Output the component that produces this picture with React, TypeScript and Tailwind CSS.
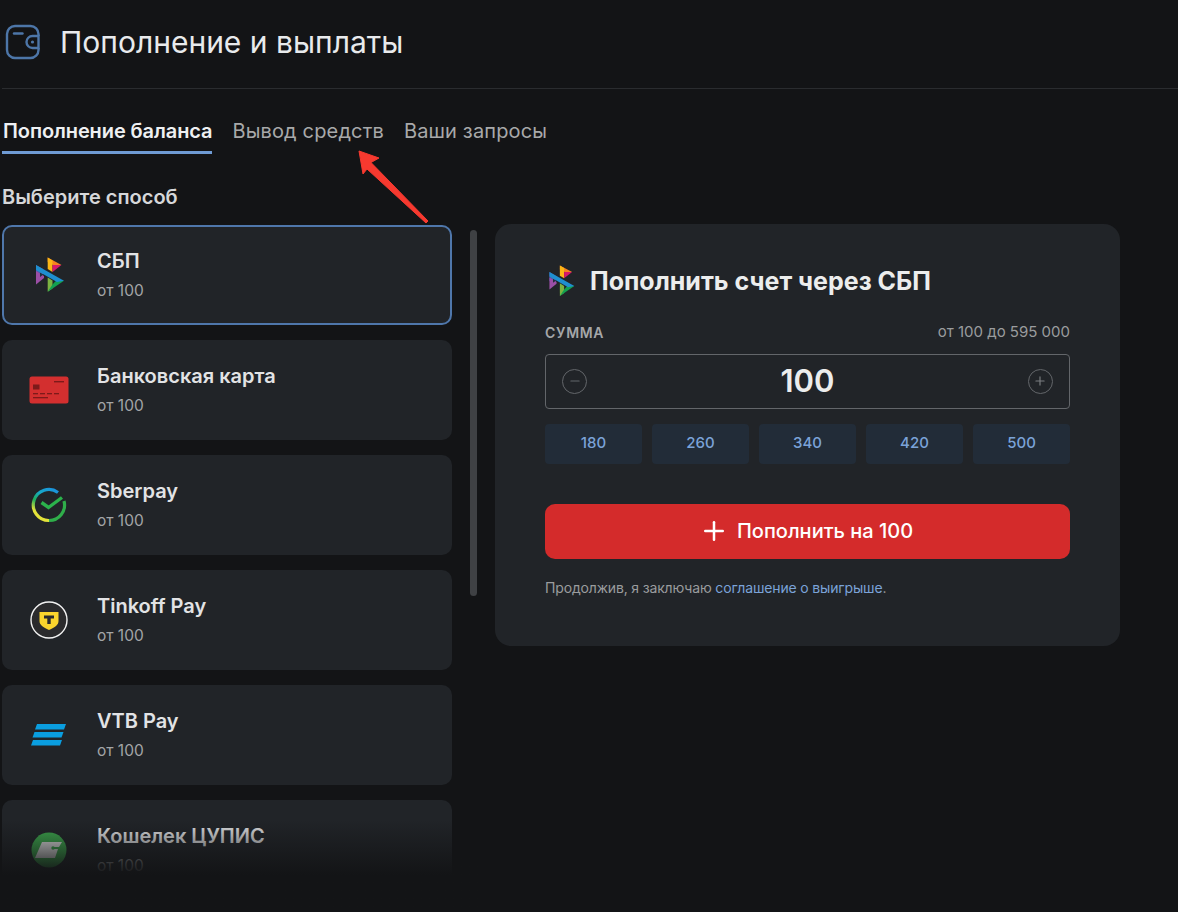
import { Minus, Plus } from "lucide-react";
import type { ReactNode } from "react";

function SbpIcon({ size = 36 }: { size?: number }) {
  return (
    <svg width={size} height={size} viewBox="0 0 36 36">
      <path d="M16.7 0.5 L30.5 8 L22 8 L16.7 5 Z" fill="#f58220" />
      <path d="M16.7 0.5 L21.5 3.5 L21.5 15 L16.7 12 Z" fill="#fbb615" />
      <path d="M21.5 8 L30.5 8 L21.5 15 Z" fill="#d6186b" />
      <path d="M5 8 L12 12 L12 20 L5 18 Z" fill="#4f5bb0" />
      <path d="M5 14 L13 19 L13 21 L5 27.5 Z" fill="#9b4fa5" />
      <path d="M9 15.5 L12.5 17.5 L9 20 Z" fill="#22303c" />
      <path d="M16.7 20.5 L21.5 23.5 L21.5 31.5 L16.7 34.8 Z" fill="#7cb342" />
      <path d="M33 23.7 L16.7 34.8 L21.5 27.5 L25 23.7 Z" fill="#12a150" />
      <path d="M5 8 L33 23.7 L26 25 L5 13 Z" fill="#1f8fd0" />
    </svg>
  );
}

function CardIcon() {
  return (
    <svg width="40" height="28" viewBox="0 0 40 28">
      <rect x="0.5" y="0.5" width="39" height="27" rx="2.5" fill="#d32f2f" />
      <rect x="4" y="8.5" width="6.5" height="5" fill="#7d1a1a" />
      <rect x="25" y="5" width="10" height="1.4" fill="#7d1a1a" />
      <rect x="4" y="17" width="5" height="1.3" fill="#7d1a1a" />
      <rect x="11" y="17" width="5" height="1.3" fill="#7d1a1a" />
      <rect x="18" y="17" width="5" height="1.3" fill="#7d1a1a" />
      <rect x="25" y="17" width="5" height="1.3" fill="#7d1a1a" />
      <rect x="4" y="21" width="15" height="1.3" fill="#7d1a1a" />
    </svg>
  );
}

function SberIcon() {
  return (
    <svg width="36" height="36" viewBox="0 0 36 36" fill="none">
      <defs>
        <linearGradient id="sber" x1="28" y1="3" x2="8" y2="33" gradientUnits="userSpaceOnUse">
          <stop offset="0" stopColor="#1c8fe0" />
          <stop offset="0.35" stopColor="#16a9c9" />
          <stop offset="0.6" stopColor="#1fae5a" />
          <stop offset="0.85" stopColor="#e4e23a" />
        </linearGradient>
      </defs>
      <path d="M27 5.5 A15.5 15.5 0 1 0 18 33.5" stroke="url(#sber)" strokeWidth="3.2" />
      <path d="M33 14 A15.5 15.5 0 0 1 18 33.5" stroke="#2fae4a" strokeWidth="3.2" />
      <path d="M10.5 15.5 L17.5 20.5 L31 10.5" stroke="#2bb24c" strokeWidth="3.4" />
    </svg>
  );
}

function TinkoffIcon() {
  return (
    <svg width="38" height="38" viewBox="0 0 38 38">
      <circle cx="19" cy="19" r="18" fill="#2b2b2d" stroke="#f2f2f2" strokeWidth="1.4" />
      <path d="M9.5 11 H28.5 V20 C28.5 24 25 26 19 29 C13 26 9.5 24 9.5 20 Z" fill="#fbd52d" />
      <path d="M14 14.5 H24 V17.5 H20.7 V23 H17.3 V17.5 H14 Z" fill="#2b2b2d" />
    </svg>
  );
}

function VtbIcon() {
  return (
    <svg width="36" height="24" viewBox="0 0 36 24">
      <path d="M6 1 H35 L33 6.5 H4 Z" fill="#0a9ee0" />
      <path d="M3.5 9 H32.5 L30.5 14.5 H1.5 Z" fill="#0a9ee0" />
      <path d="M2 17 H31 L29 22.5 H0 Z" fill="#0a9ee0" />
    </svg>
  );
}

function CupisIcon() {
  return (
    <svg width="36" height="36" viewBox="0 0 36 36">
      <circle cx="18" cy="18" r="17.5" fill="#3da84d" />
      <path d="M11 10 H31 L28 15 H21 V17 H27 L24 26 H4 Z" fill="#e2e2e2" />
      <circle cx="22" cy="16" r="1.7" fill="#3da84d" />
    </svg>
  );
}

function WalletIcon() {
  return (
    <svg width="36" height="36" viewBox="0 0 36 36" fill="none" stroke="#4d76a8" strokeWidth="2.4">
      <path d="M33.5 12 V10 A8 8 0 0 0 25.5 2 H10 A8 8 0 0 0 2 10 V26 A8 8 0 0 0 10 34 H25.5 A8 8 0 0 0 33.5 26 V24" />
      <path d="M33.5 12 H27.5 A6 6 0 0 0 27.5 24 H33.5 V12 Z" />
      <circle cx="27.5" cy="18" r="1.6" fill="#4d76a8" stroke="none" />
      <path d="M9 9.5 H17.5" strokeLinecap="round" />
    </svg>
  );
}

const methods: { name: string; icon: ReactNode }[] = [
  { name: "СБП", icon: <SbpIcon /> },
  { name: "Банковская карта", icon: <CardIcon /> },
  { name: "Sberpay", icon: <SberIcon /> },
  { name: "Tinkoff Pay", icon: <TinkoffIcon /> },
  { name: "VTB Pay", icon: <VtbIcon /> },
  { name: "Кошелек ЦУПИС", icon: <CupisIcon /> },
];

const presets = ["180", "260", "340", "420", "500"];

export default function App() {
  return (
    <div className="relative h-[912px] w-[1178px] overflow-hidden bg-[#131416] font-['Inter',sans-serif] text-[#e9eaec]">
      <header className="ml-[2px] flex h-[89px] items-center gap-[19px] border-b border-[#2a2c2f] pb-[4px] pl-[3px]">
        <WalletIcon />
        <h1 className="text-[30px] font-normal leading-none text-[#e8eaec]">Пополнение и выплаты</h1>
      </header>

      <nav className="ml-[2px] mt-[27px] flex items-start gap-[20px] text-[20px] leading-[30px]">
        <button type="button" className="h-[38px] self-start border-b-[3px] border-[#6f9bd4] pb-[5px] pl-px font-semibold tracking-[-0.005em] text-[#eef0f2]">
          <span className="block h-[30px]">Пополнение баланса</span>
        </button>
        <button type="button" className="h-[30px] tracking-[0.15px] text-[#a8a9aa]">Вывод средств</button>
        <button type="button" className="h-[30px] tracking-[0.15px] text-[#a8a9aa]">Ваши запросы</button>
      </nav>

      <h2 className="ml-[2px] mt-[28px] text-[20px] font-semibold leading-[30px] text-[#d6d7d9]">Выберите способ</h2>

      <div className="mt-[13px] flex items-start pl-[2px]">
        <div className="flex w-[450px] shrink-0 flex-col gap-[15px]">
          {methods.map((method, idx) => (
            <article
              key={method.name}
              className={`flex h-[100px] shrink-0 items-center rounded-[10px] bg-[#212428] ${
                idx === 0 ? "border-2 border-[#4f77ab]" : ""
              }`}
            >
              <div className={`flex w-[95px] shrink-0 justify-center pr-[2px] ${idx === 0 ? "-ml-[2px]" : ""}`}>
                <div className="flex h-[40px] w-[40px] items-center justify-center">{method.icon}</div>
              </div>
              <div className="flex flex-col pb-[2px]">
                <span className="text-[20px] font-semibold leading-[30px] text-[#e2e3e5]">{method.name}</span>
                <span className="mt-[3px] text-[15.5px] leading-[24px] text-[#a3a5a7]">от 100</span>
              </div>
            </article>
          ))}
        </div>

        <div className="ml-[18px] mt-[5px] h-[366px] w-[7px] shrink-0 rounded-full bg-[#3f4144]" />

        <section className="ml-[18px] -mt-px h-[422px] w-[625px] shrink-0 rounded-[16px] bg-[#212428] px-[50px] pt-[39px]">
          <div className="flex h-[36px] items-center gap-[13px]">
            <SbpIcon size={32} />
            <h3 className="text-[25px] font-bold leading-none text-[#eceded]">Пополнить счет через СБП</h3>
          </div>

          <div className="mt-[22px] flex items-center justify-between">
            <span className="text-[14px] font-semibold tracking-[0.05em] text-[#a5a7a9]">СУММА</span>
            <span className="text-[15px] text-[#9a9c9e]">от 100 до 595 000</span>
          </div>

          <div className="mt-[10px] flex h-[55px] items-center justify-between rounded-[4px] border border-[#63666a] px-[16px]">
            <span className="flex h-[25px] w-[25px] items-center justify-center rounded-full border-[1.5px] border-[#63666a] text-[#63666a]">
              <Minus size={14} />
            </span>
            <span className="text-[31px] font-semibold text-[#eceded]">100</span>
            <span className="flex h-[25px] w-[25px] items-center justify-center rounded-full border-[1.5px] border-[#63666a] text-[#7a7d80]">
              <Plus size={14} />
            </span>
          </div>

          <div className="mt-[15px] grid grid-cols-5 gap-[10px]">
            {presets.map((value) => (
              <button
                key={value}
                type="button"
                className="h-[40px] rounded-[4px] bg-[#222c38] text-[15px] font-medium text-[#7ba3d8]"
              >
                {value}
              </button>
            ))}
          </div>

          <button
            type="button"
            className="mt-[40px] flex h-[55px] w-full items-center justify-center gap-[8px] rounded-[10px] bg-[#d42b2b] pr-[3px] text-[20px] font-medium text-white"
          >
            <Plus size={30} strokeWidth={2} />
            Пополнить на 100
          </button>

          <p className="mt-[19px] text-[14px] leading-[20px] tracking-[-0.16px] text-[#9a9c9e]">
            Продолжив, я заключаю <span className="text-[#7ba3d8]">соглашение о выигрыше</span>.
          </p>
        </section>
      </div>

      {/* затемнение низа списка */}
      <div className="absolute bottom-0 left-0 h-[92px] w-[480px] bg-gradient-to-b from-[#131416]/0 to-[#131416] to-[60%]" />

      {/* стрелка-пометка поверх скриншота */}
      <svg className="absolute left-[354px] top-[148px]" width="80" height="78" viewBox="0 0 80 78">
        <path d="M5 3 L25 10 L17 14.5 L74 73 L72 75 L13 21 L9 26 Z" fill="#f7392f" stroke="#f7392f" strokeLinejoin="round" />
      </svg>
    </div>
  );
}
